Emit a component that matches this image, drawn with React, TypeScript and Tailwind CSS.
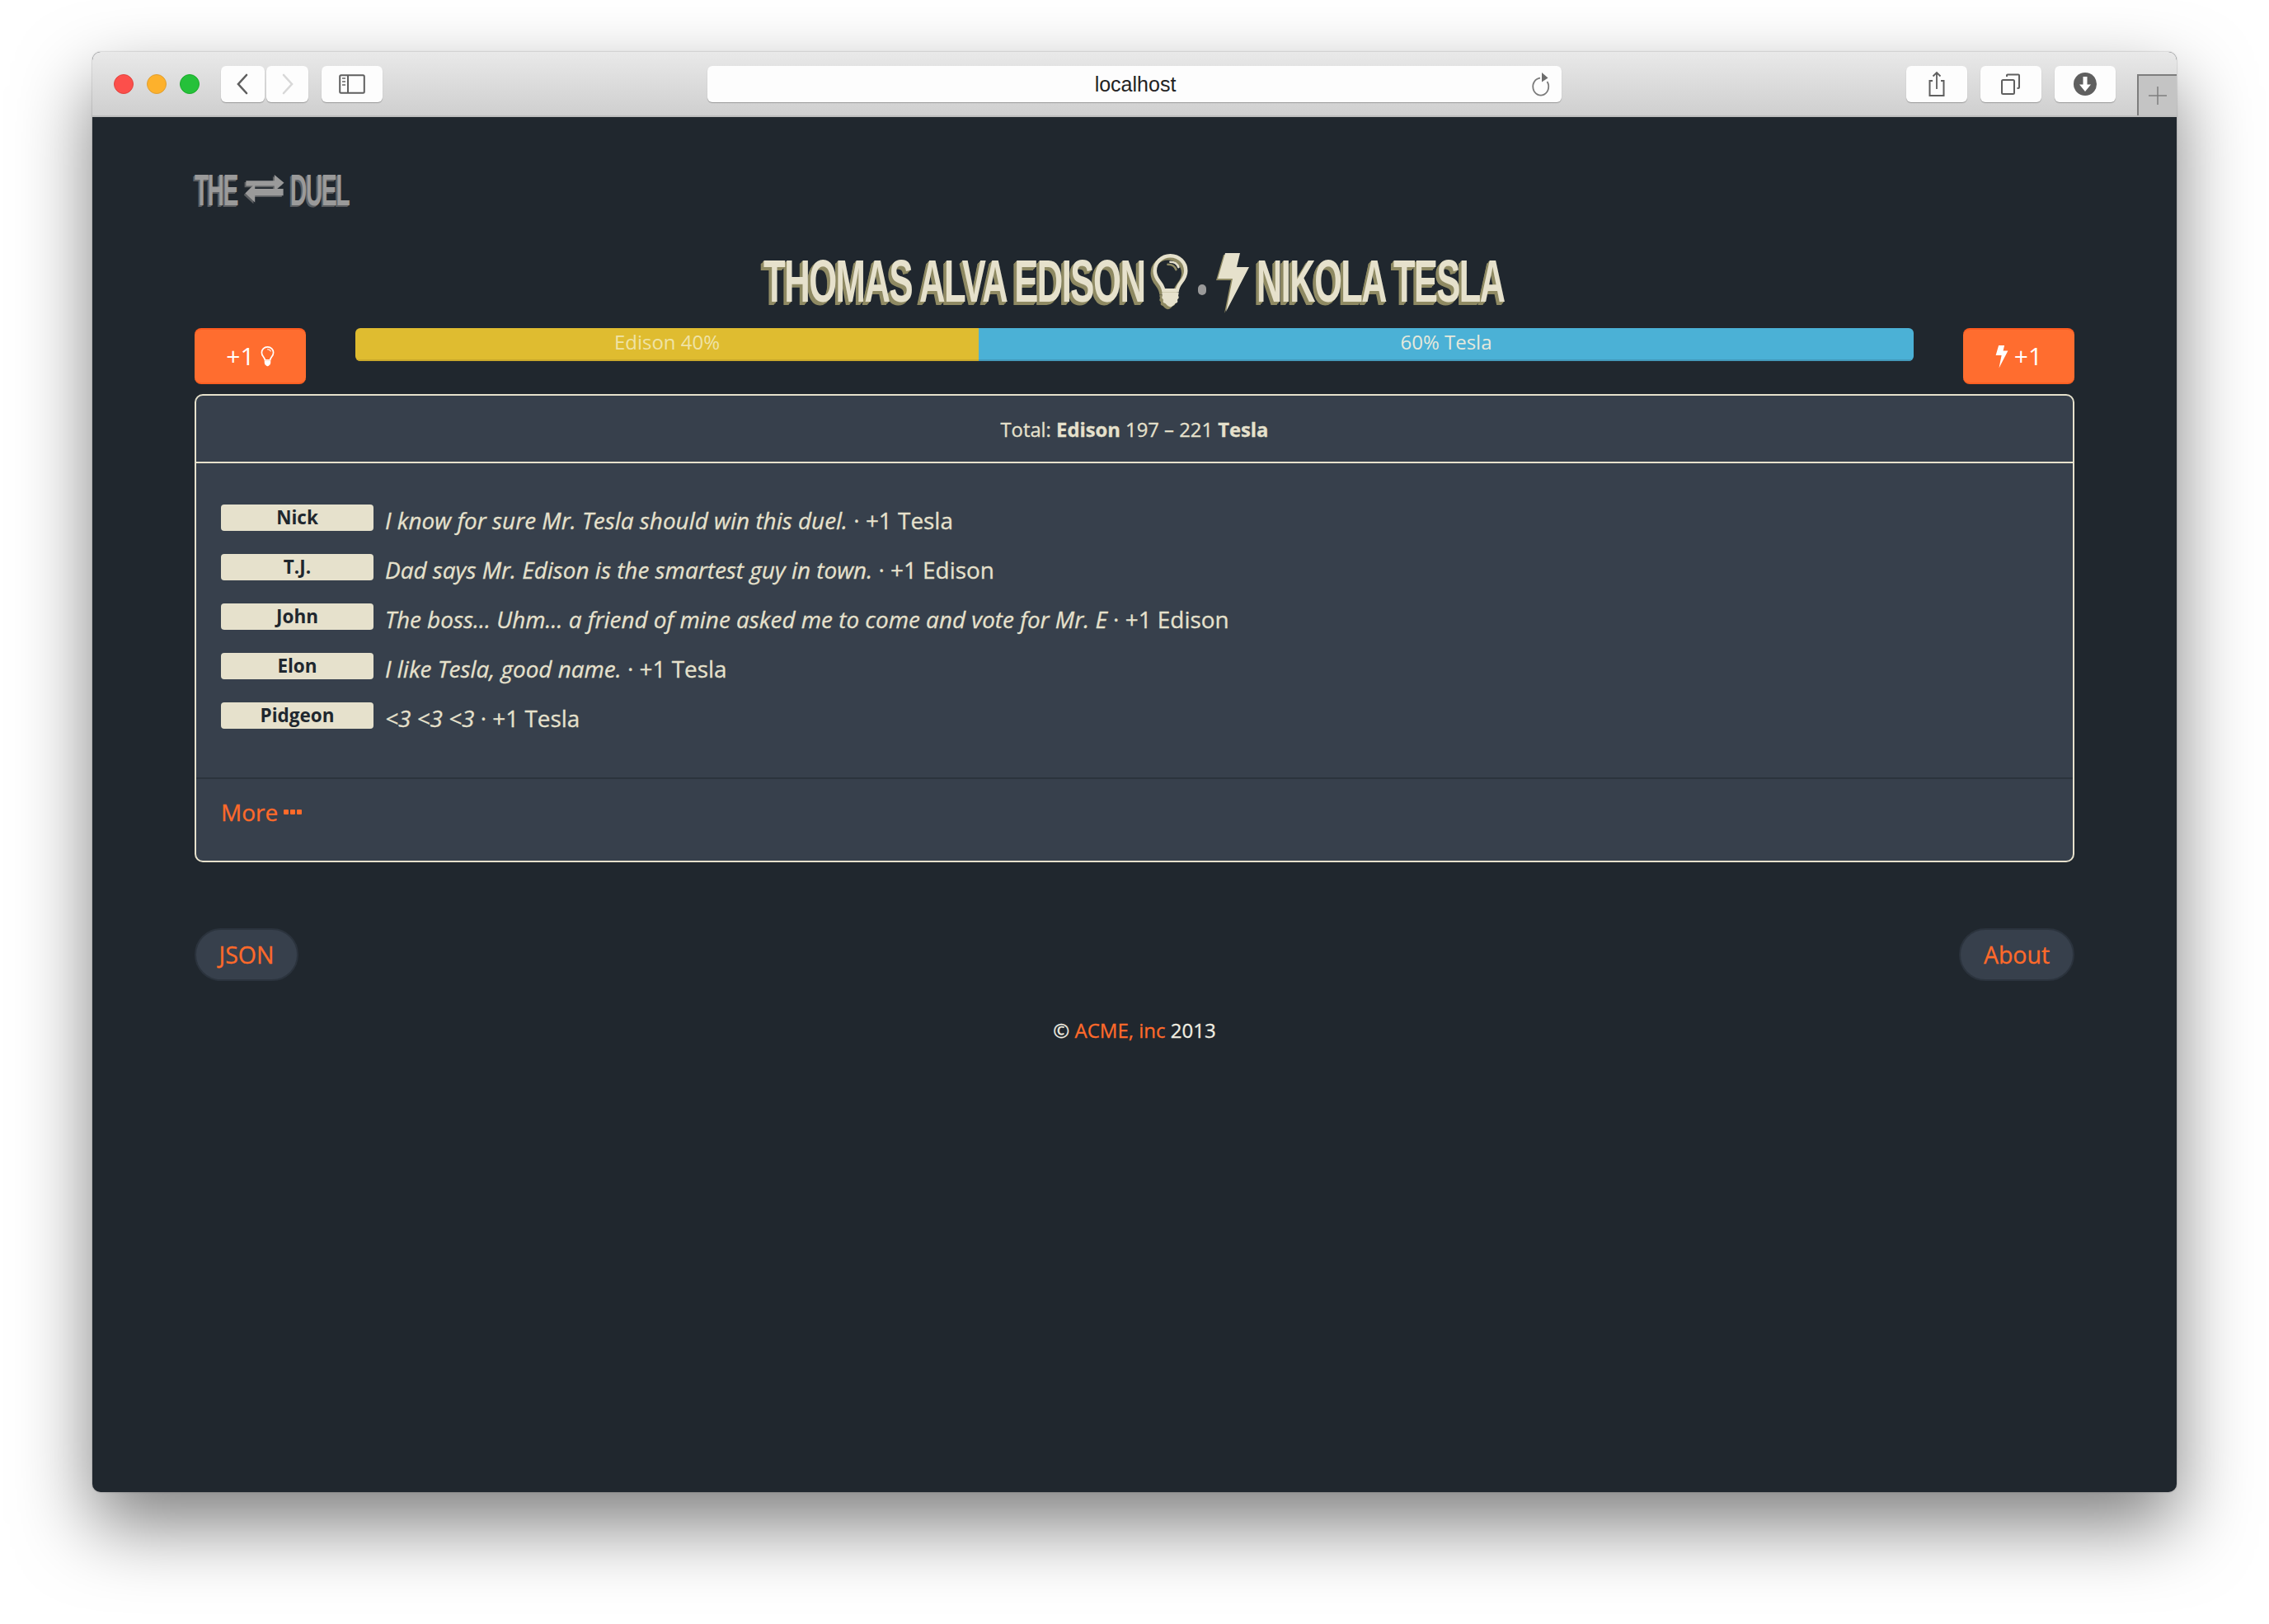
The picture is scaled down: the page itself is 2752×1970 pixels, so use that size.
import React from "react";

const ToolBtn = ({ w, children, cls = "" }: { w: string; children?: React.ReactNode; cls?: string }) => (
  <div className={`h-[44px] ${w} rounded-[6px] bg-[#fdfdfd] shadow-[0_1px_1px_rgba(0,0,0,0.28)] flex items-center justify-center ${cls}`}>{children}</div>
);

const Bulb = ({ className = "", fill = "#e6e1cc" }: { className?: string; fill?: string }) => (
  <svg viewBox="0 0 28 44" className={className}>
    <path d="M14 1.500C6.800 1.500 1.500 7 1.500 13.600c0 3.800 1.600 6.400 3.600 9 1.600 2.100 3 4.200 3.400 6.900h11c.4-2.700 1.800-4.800 3.400-6.900 2-2.600 3.600-5.200 3.600-9C26.500 7 21.200 1.500 14 1.500z" fill="none" stroke={fill} strokeWidth="3" />
    <path d="M14 6.500c3 0 5.600 1.600 6.600 4.200" fill="none" stroke={fill} strokeWidth="1.800" strokeLinecap="round" />
    <path d="M8 31h12c.8 0 1 1 .6 1.700-.3.500-.3 1 0 1.600.4.800.2 1.600-.4 2-.5.400-.6.900-.4 1.500.3 1-.2 1.800-1.200 2-.5.100-.9.500-1.300 1-.9 1.200-2.800 2-3.300 2s-2.400-.8-3.300-2c-.4-.5-.8-.9-1.300-1-1-.2-1.500-1-1.200-2 .2-.6.100-1.100-.4-1.500-.6-.4-.8-1.200-.4-2 .3-.6.3-1.100 0-1.600-.4-.7-.2-1.700.6-1.700z" fill={fill} />
  </svg>
);

const Bolt = ({ className = "", fill = "#e6e1cc" }: { className?: string; fill?: string }) => (
  <svg viewBox="0 0 40 72" className={className}>
    <path d="M10 0H28L24 17H39L11 71L19 31H1z" fill={fill} />
  </svg>
);

const rows = [
  ["Nick", "I know for sure Mr. Tesla should win this duel.", "+1 Tesla"],
  ["T.J.", "Dad says Mr. Edison is the smartest guy in town.", "+1 Edison"],
  ["John", "The boss... Uhm... a friend of mine asked me to come and vote for Mr. E", "+1 Edison"],
  ["Elon", "I like Tesla, good name.", "+1 Tesla"],
  ["Pidgeon", "<3 <3 <3", "+1 Tesla"],
];

export default function App() {
  return (
    <div className="w-full h-[1970px] bg-white pl-[112px] pt-[63px] overflow-hidden font-['Open_Sans',sans-serif] text-[#e6e1cc]">
      <div className="w-[2528px] h-[1747px] rounded-[10px] bg-[#20272e] flex flex-col shadow-[0_40px_90px_rgba(0,0,0,0.5),0_0_2px_rgba(0,0,0,0.35)]">
        {/* toolbar */}
        <div className="h-[79px] shrink-0 rounded-t-[10px] bg-gradient-to-b from-[#e9e9e9] to-[#cfcfcf] border-b-2 border-[#bdbdbd] flex pl-[26px] relative">
          <div className="flex items-center h-[77px] gap-[16px] pt-[1px]">
            <div className="w-[24px] h-[24px] rounded-full bg-[#fc4f4b] border border-[#e0443e]" />
            <div className="w-[24px] h-[24px] rounded-full bg-[#fdb12c] border border-[#de9f34]" />
            <div className="w-[24px] h-[24px] rounded-full bg-[#25c13a] border border-[#1aab29]" />
          </div>
          <div className="flex items-center h-[77px] ml-[26px] pt-[1px]">
            <ToolBtn w="w-[53px]">
              <svg width="18" height="26" viewBox="0 0 18 26" className="mr-[2px]"><path d="M14 2L4 13l10 11" fill="none" stroke="#5f5f5f" strokeWidth="2.600" strokeLinecap="round" /></svg>
            </ToolBtn>
            <ToolBtn w="w-[51px]" cls="ml-[2px]">
              <svg width="18" height="26" viewBox="0 0 18 26"><path d="M4 2l10 11L4 24" fill="none" stroke="#d8d8d8" strokeWidth="2.600" strokeLinecap="round" /></svg>
            </ToolBtn>
            <ToolBtn w="w-[74px]" cls="ml-[16px]">
              <svg width="32" height="24" viewBox="0 0 32 24">
                <rect x="1.200" y="1.200" width="29.600" height="21.600" rx="1.500" fill="none" stroke="#5f5f5f" strokeWidth="2" />
                <path d="M11 1v22" stroke="#5f5f5f" strokeWidth="2" />
                <path d="M4 5h4M4 9h4M4 13h4" stroke="#8a8a8a" strokeWidth="2" />
              </svg>
            </ToolBtn>
          </div>
          <div className="flex items-center h-[77px] ml-[394px] pt-[1px]">
            <ToolBtn w="w-[1036px]" cls="relative">
              <span className="font-['Liberation_Sans',sans-serif] text-[25px] text-[#222] ml-[2px] mt-[2px]">localhost</span>
              <svg width="26" height="32" viewBox="0 0 26 32" className="absolute right-[11px] top-[6px]">
                <path d="M11 8.600A9.500 10.500 0 1 0 19.500 13" fill="none" stroke="#7b7b7b" strokeWidth="1.800" />
                <path d="M13 2l7.500 6.500-7.500 5z" fill="#6d6d6d" />
              </svg>
            </ToolBtn>
          </div>
          <div className="flex items-center h-[77px] ml-[418px] gap-[16px] pt-[1px]">
            <ToolBtn w="w-[74px]">
              <svg width="26" height="32" viewBox="0 0 26 32">
                <path d="M8 12H4.500v18h17V12H18" fill="none" stroke="#5f5f5f" strokeWidth="2" />
                <path d="M13 22V2M8.500 6.500L13 2l4.500 4.500" fill="none" stroke="#5f5f5f" strokeWidth="1.800" />
              </svg>
            </ToolBtn>
            <ToolBtn w="w-[74px]">
              <svg width="26" height="26" viewBox="0 0 26 26">
                <rect x="2" y="8" width="15" height="17" rx="1.500" fill="none" stroke="#5f5f5f" strokeWidth="2" />
                <path d="M8 4V2.500c0-.6.500-1 1-1h13c.6 0 1 .4 1 1V17c0 .6-.4 1-1 1h-1.500" fill="none" stroke="#5f5f5f" strokeWidth="2" />
              </svg>
            </ToolBtn>
            <ToolBtn w="w-[74px]">
              <svg width="28" height="28" viewBox="0 0 28 28">
                <circle cx="14" cy="14" r="14" fill="#5f5f5f" />
                <path d="M11.500 5h5v9.500h4.500L14 23l-7-8.500h4.500z" fill="#fff" />
              </svg>
            </ToolBtn>
          </div>
          <div className="absolute right-0 bottom-0 w-[48px] h-[50px] border-t-2 border-l-2 border-[#7d7d7d] bg-[#c4c4c4] flex items-center justify-center">
            <svg width="24" height="24" viewBox="0 0 24 24"><path d="M12 1v22M1 12h22" stroke="#7d7d7d" strokeWidth="1.500" /></svg>
          </div>
        </div>

        {/* content */}
        <div className="flex flex-col px-[124px]">
          <div className="mt-[50px] h-[75px] mb-[5px] flex items-center text-[#9a9a9a] font-['Liberation_Sans',sans-serif] font-bold text-[54px] leading-none tracking-[-2.500px] [text-shadow:-2px_1px_0_#5c5f62,-4px_2px_0_#5c5f62]">
            <span className="inline-block w-[53px]"><span className="inline-block origin-left scale-x-[0.52] whitespace-nowrap">THE</span></span>
            <svg width="50" height="38" viewBox="0 0 54 42" className="ml-[7px] mr-[6px]">
              <g fill="#5c5f62" transform="translate(-2 2)">
                <path d="M2 9h38V1l13 11-13 11v-7H2z" />
                <path d="M52 20H14v-7L1 26l13 12v-9h38z" />
              </g>
              <g fill="#9a9a9a">
                <path d="M2 9h38V1l13 11-13 11v-7H2z" />
                <path d="M52 20H14v-7L1 26l13 12v-9h38z" />
              </g>
            </svg>
            <span className="inline-block w-[71px]"><span className="inline-block origin-left scale-x-[0.52] whitespace-nowrap">DUEL</span></span>
          </div>

          <h1 className="mt-[30px] h-[80px] flex items-center justify-center font-['Liberation_Sans',sans-serif] font-bold text-[72px] leading-none tracking-[-2.500px] text-[#e6e1cc] [text-shadow:-2px_1px_0_#8f8a63,-3px_2px_0_#8f8a63,-5px_3px_0_#8f8a63,-6px_4px_0_#8f8a63]">
            <span className="inline-block w-[465px] -mt-[3px]"><span className="inline-block origin-left scale-x-[0.606] whitespace-nowrap">THOMAS ALVA EDISON</span></span>
            <span className="relative w-[43px] h-[68px] ml-[7px]">
              <Bulb fill="#8f8a63" className="absolute left-[-3px] top-[3px] w-[43px] h-[66px]" />
              <Bulb className="absolute left-0 top-0 w-[43px] h-[66px]" />
            </span>
            <span className="w-[10px] h-[13px] ml-[12px] mt-[18px] rounded-full bg-[#9a9a9a]" />
            <span className="relative w-[40px] h-[72px] ml-[13px] mt-[2px]">
              <Bolt fill="#8f8a63" className="absolute left-[-2px] top-[2px] w-[40px] h-[72px]" />
              <Bolt className="absolute left-0 top-0 w-[40px] h-[72px]" />
            </span>
            <span className="inline-block w-[302px] ml-[8px] -mt-[3px]"><span className="inline-block origin-left scale-x-[0.602] whitespace-nowrap">NIKOLA TESLA</span></span>
          </h1>

          <div className="mt-[16px] flex items-start gap-[60px]">
            <button className="w-[135px] h-[68px] shrink-0 rounded-[8px] bg-[#ff6d2f] border-t-2 border-b-2 border-t-[#ff5a1f] border-b-[#fb5f22] text-white text-[30px] flex items-center justify-center gap-[7px]">
              <span className="-mt-[1px]">+1</span>
              <Bulb fill="#ffffff" className="w-[17px] h-[25px]" />
            </button>
            <div className="flex-1 h-[40px] rounded-[6px] overflow-hidden flex text-[24px] leading-[34px] text-center">
              <div className="w-[756px] bg-[#dfbc30] border-b-2 border-[#c9a82b] text-[#efe3a6]">Edison 40%</div>
              <div className="flex-1 bg-[#4bb1d6] border-b-2 border-[#4399ba] text-[#e6e9dc]">60% Tesla</div>
            </div>
            <button className="w-[135px] h-[68px] shrink-0 rounded-[8px] bg-[#ff6d2f] border-t-2 border-b-2 border-t-[#ff5a1f] border-b-[#fb5f22] text-white text-[30px] flex items-center justify-center gap-[7px]">
              <Bolt fill="#ffffff" className="w-[16px] h-[28px] mt-[2px]" />
              <span className="-mt-[1px]">+1</span>
            </button>
          </div>

          <div className="mt-[12px] h-[568px] rounded-[10px] border-2 border-[#e6e1cc] bg-[#37404c] flex flex-col">
            <div className="h-[82px] shrink-0 border-b-2 border-[#e6e1cc] flex items-center justify-center text-[23.800px] pt-[3px] [-webkit-text-stroke:0.3px_currentColor]">
              <span>Total: <b>Edison</b> 197 – 221 <b>Tesla</b></span>
            </div>
            <div className="h-[383px] shrink-0 border-b-2 border-[#2b333d] px-[30px] pt-[50px] flex flex-col gap-[28px]">
              {rows.map(([n, q, v]) => (
                <div key={n} className="flex items-start h-[32px]">
                  <div className="w-[185px] h-[32px] shrink-0 rounded-[4px] bg-[#e6e1cc] text-[#20272e] text-[22.500px] font-bold leading-[31px] text-center">{n}</div>
                  <div className="ml-[14px] -mt-[1px] text-[27.900px] leading-[40px] whitespace-nowrap [-webkit-text-stroke:0.3px_currentColor]"><i>{q}</i> · {v}</div>
                </div>
              ))}
            </div>
            <div className="px-[30px] flex-1 flex items-center pb-[20px] text-[#ff6a2a] text-[28px] [-webkit-text-stroke:0.3px_currentColor]">
              <span>More</span>
              <span className="ml-[7px] flex gap-[2px]">
                <span className="w-[6px] h-[6px] rounded-[1px] bg-[#ff6a2a]" />
                <span className="w-[6px] h-[6px] rounded-[1px] bg-[#ff6a2a]" />
                <span className="w-[6px] h-[6px] rounded-[1px] bg-[#ff6a2a]" />
              </span>
            </div>
          </div>

          <div className="mt-[80px] flex justify-between">
            <div className="h-[64px] w-[126px] rounded-full bg-[#37404c] border-2 border-[#2b333d] flex items-center justify-center text-[28.500px] text-[#ff6a2a] [-webkit-text-stroke:0.3px_currentColor]">JSON</div>
            <div className="h-[64px] w-[140px] rounded-full bg-[#37404c] border-2 border-[#2b333d] flex items-center justify-center text-[28.500px] text-[#ff6a2a] [-webkit-text-stroke:0.3px_currentColor]">About</div>
          </div>

          <div className="mt-[42px] text-center text-[24px] leading-[36px] text-[#f1eee2] [-webkit-text-stroke:0.3px_currentColor]">
            © <span className="text-[#ff6a2a]">ACME, inc</span> 2013
          </div>
        </div>
      </div>
    </div>
  );
}
